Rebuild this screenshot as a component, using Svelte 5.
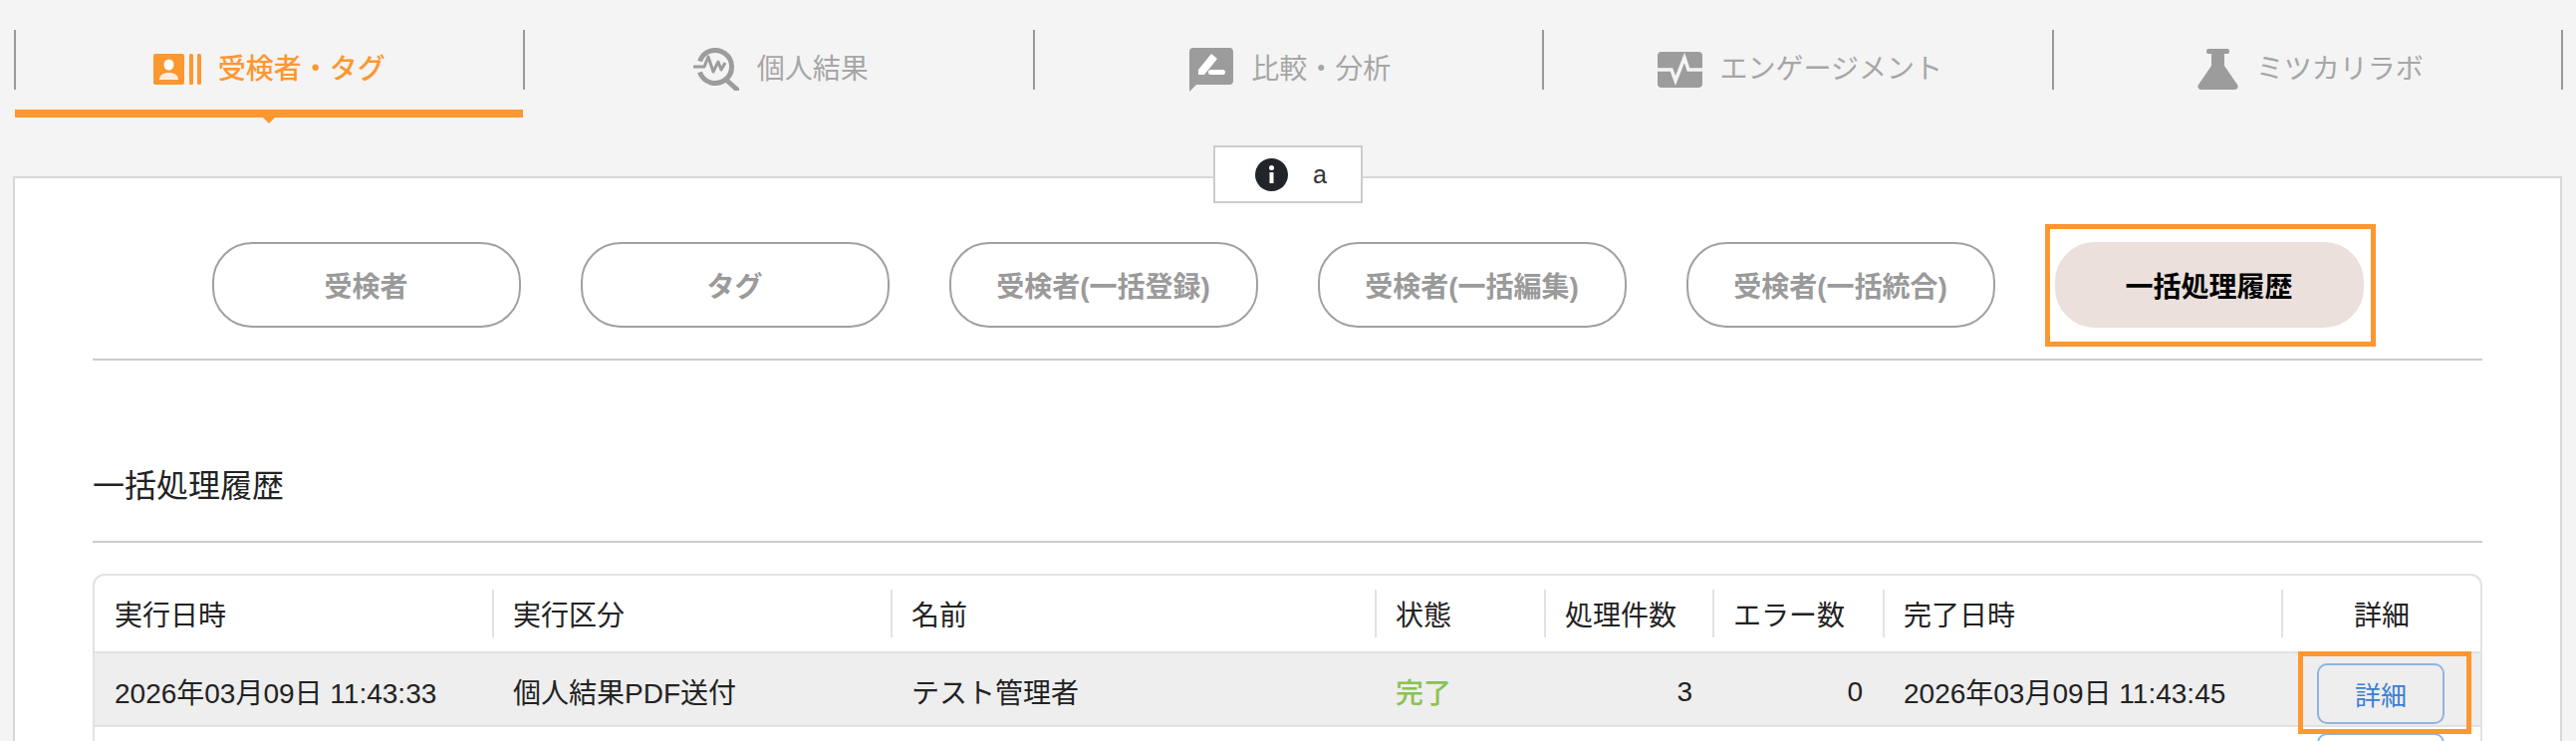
<script>
	const pills = ['受検者', 'タグ', '受検者(一括登録)', '受検者(一括編集)', '受検者(一括統合)', '一括処理履歴'];
	const columns = [
		{ label: '実行日時' },
		{ label: '実行区分' },
		{ label: '名前' },
		{ label: '状態' },
		{ label: '処理件数' },
		{ label: 'エラー数' },
		{ label: '完了日時' },
		{ label: '詳細', center: true }
	];
</script>

<div class="page">
	<nav class="tabs">
		<div class="tab tab--active">
			<a class="tab-link" href="#top">
				<svg width="49" height="31" viewBox="0 0 49 31">
					<rect width="31" height="31" rx="2" fill="currentColor" />
					<ellipse cx="15.500" cy="11" rx="5" ry="5.500" fill="#fff" />
					<path d="M6 26c0-4.500 4-7 9.500-7s9.500 2.500 9.500 7z" fill="#fbeee0" />
					<rect x="36" width="4" height="31" rx="1.500" fill="currentColor" />
					<rect x="44" width="4" height="31" rx="1.500" fill="currentColor" />
				</svg>
				<span>受検者・タグ</span>
			</a>
			<div class="tab-bar"></div>
		</div>
		<div class="tab">
			<a class="tab-link" href="#top">
				<svg width="46" height="43" viewBox="0 0 46 43" fill="none" stroke="currentColor">
					<path d="M6.500 13.500a16.500 16.500 0 1 1 0 11" stroke-width="5" />
					<path d="M0 19h11l4-10 5 15 5-10 3 8 4-7" stroke-width="3" stroke-linejoin="round" />
					<path d="M34 33l10 9" stroke-width="5" stroke-linecap="round" />
				</svg>
				<span>個人結果</span>
			</a>
		</div>
		<div class="tab">
			<a class="tab-link" href="#top">
				<svg width="44" height="44" viewBox="0 0 44 44">
					<path d="M4 0h36a4 4 0 0 1 4 4v29a4 4 0 0 1-4 4H7l-7 7V4a4 4 0 0 1 4-4z" fill="currentColor" />
					<path d="M9 27v-5L22 6l6 5-13 16z" fill="#fff" />
					<rect x="19" y="22" width="17" height="5" rx="2.500" fill="#fff" />
				</svg>
				<span>比較・分析</span>
			</a>
		</div>
		<div class="tab">
			<a class="tab-link" href="#top">
				<svg width="45" height="36" viewBox="0 0 45 36">
					<rect width="45" height="36" rx="4" fill="currentColor" />
					<path d="M0 18h14l4 11 9-23 4 12h14" fill="none" stroke="#f4f4f4" stroke-width="3.500" />
				</svg>
				<span>エンゲージメント</span>
			</a>
		</div>
		<div class="tab">
			<a class="tab-link" href="#top">
				<svg width="41" height="41" viewBox="0 0 41 41">
					<rect x="9" width="23" height="5" rx="2" fill="currentColor" />
					<path d="M14 4h13v13l13 19c1.500 2.500 0 5-3 5H4c-3 0-4.500-2.500-3-5l13-19z" fill="currentColor" />
				</svg>
				<span>ミツカリラボ</span>
			</a>
		</div>
	</nav>

	<main class="panel">
		<div class="notice">
			<svg width="33" height="33" viewBox="0 0 33 33">
				<circle cx="16.500" cy="16.500" r="16.500" fill="#212529" />
				<rect x="14.500" y="14" width="4" height="11" fill="#fff" />
				<circle cx="16.500" cy="9.500" r="2.500" fill="#fff" />
			</svg>
			<span>a</span>
		</div>

		<div class="pills">
			{#each pills as pill, i}
				<button class="pill" class:pill--active={i === pills.length - 1}>{pill}</button>
			{/each}
		</div>

		<h2 class="title">一括処理履歴</h2>

		<div class="table-box">
			<table>
				<colgroup>
					<col style="width: 399px" />
					<col style="width: 400px" />
					<col style="width: 486px" />
					<col style="width: 170px" />
					<col style="width: 169px" />
					<col style="width: 171px" />
					<col style="width: 400px" />
					<col style="width: 200px" />
				</colgroup>
				<thead>
					<tr>
						{#each columns as col, i}
							<th>
								<div class="th-inner" class:th-inner--first={i === 0} class:center={col.center}>{col.label}</div>
							</th>
						{/each}
					</tr>
				</thead>
				<tbody>
					<tr class="selected">
						<td>2026年03月09日 11:43:33</td>
						<td>個人結果PDF送付</td>
						<td>テスト管理者</td>
						<td class="done">完了</td>
						<td class="num">3</td>
						<td class="num">0</td>
						<td>2026年03月09日 11:43:45</td>
						<td class="action"><button class="detail">詳細</button></td>
					</tr>
					<tr>
						<td colspan="7"></td>
						<td class="action"><button class="detail">詳細</button></td>
					</tr>
				</tbody>
			</table>
		</div>
	</main>

	<!-- annotation frames drawn over the screen -->
	<div class="mark mark--tab"></div>
	<div class="mark mark--detail"></div>
</div>

<style>
	:global(body) {
		margin: 0;
		background: #f4f4f4;
	}

	.page {
		position: relative;
		width: 2586px;
		height: 744px;
		overflow: hidden;
		background: #f4f4f4;
		font-family: "Liberation Sans", "Noto Sans CJK JP", sans-serif;
		font-size: 28px;
		color: #222;
	}

	.tabs {
		display: flex;
		height: 118px;
		margin: 0 0 59px 13.500px;
		padding-top: 30px;
		box-sizing: border-box;
	}

	.tab {
		width: 511.500px;
		display: flex;
		flex-direction: column;
		color: #9c9c9c;
	}

	.tab:last-child {
		width: 513.500px;
	}

	.tab--active {
		color: #fd9730;
		font-weight: 500;
	}

	.tab-link {
		display: flex;
		align-items: center;
		justify-content: center;
		gap: 18px;
		height: 60px;
		box-sizing: border-box;
		padding: 19px 0 0 4px;
		border-left: 2px solid #999;
		color: inherit;
		text-decoration: none;
		white-space: nowrap;
	}

	.tab--active .tab-link {
		gap: 16px;
		padding-left: 0;
	}

	.tab:last-child .tab-link {
		padding-left: 6px;
		border-right: 2px solid #999;
	}

	.tab-link svg {
		flex-shrink: 0;
	}

	.tab-link span {
		margin-top: -6px;
	}

	.tab:not(.tab--active) .tab-link span {
		color: #a6a6a6;
	}

	.tab-bar {
		position: relative;
		height: 8px;
		margin: 20px 0 0 1px;
		background: #fd9730;
	}

	.tab-bar::after {
		content: "";
		position: absolute;
		left: 50%;
		top: 8px;
		margin-left: -6px;
		border: 6px solid transparent;
		border-top-color: #fd9730;
		border-bottom: 0;
	}

	.panel {
		position: relative;
		margin: 0 14px 0 13px;
		height: 700px;
		padding: 64px 78px 0;
		border: 2px solid #d8d8d8;
		background: #fff;
	}

	.notice {
		position: absolute;
		left: 1203px;
		top: -33px;
		width: 150px;
		height: 58px;
		box-sizing: border-box;
		display: flex;
		align-items: center;
		gap: 25px;
		padding-left: 40px;
		border: 2px solid #ccc;
		background: #fff;
		font-size: 25px;
		color: #333;
	}

	.pills {
		display: flex;
		justify-content: center;
		gap: 60px;
		padding-bottom: 31px;
		border-bottom: 2px solid #ccc;
	}

	.pill {
		width: 310px;
		height: 86px;
		box-sizing: border-box;
		border: 2px solid #a0a0a0;
		border-radius: 40px;
		background: #fff;
		font: inherit;
		font-weight: 700;
		color: #9a9a9a;
	}

	.pill--active {
		border-color: #ebe0dc;
		background: #ebe0dc;
		color: #000;
	}

	.title {
		margin: 0;
		padding: 106px 0 35px;
		border-bottom: 2px solid #ccc;
		font-size: 32px;
		font-weight: 400;
		line-height: 40px;
		color: #222;
	}

	.table-box {
		margin-top: 31px;
		border: 2px solid #e2e2e2;
		border-bottom: 0;
		border-radius: 12px 12px 0 0;
		background: #fff;
	}

	table {
		width: 100%;
		table-layout: fixed;
		border-collapse: collapse;
	}

	th {
		height: 76px;
		padding: 0;
		font-weight: 400;
		text-align: left;
	}

	.th-inner {
		height: 48px;
		padding-left: 19px;
		border-left: 2px solid #e2e2e2;
		line-height: 54px;
	}

	.th-inner--first {
		padding-left: 20px;
		border-left: 0;
	}

	.center {
		padding-left: 0;
		text-align: center;
	}

	td {
		height: 74px;
		box-sizing: border-box;
		padding: 3px 0 0 21px;
		border-top: 2px solid #e2e2e2;
		border-bottom: 2px solid #e2e2e2;
		white-space: nowrap;
	}

	td:first-child {
		padding-left: 20px;
	}

	.selected td {
		background: #eee;
	}

	.done {
		color: #8cc152;
		font-weight: 500;
	}

	td.num {
		padding: 5px 20px 0 0;
		text-align: right;
	}

	td.action {
		padding: 0;
		text-align: center;
	}

	.detail {
		display: block;
		width: 128px;
		height: 61px;
		margin: 0 auto;
		box-sizing: border-box;
		border: 2px solid #8fb4e0;
		border-radius: 10px;
		background: transparent;
		font: inherit;
		font-size: 26px;
		color: #3a7fd5;
	}

	.selected .detail {
		margin-top: 9px;
	}

	.mark {
		position: absolute;
		box-sizing: border-box;
		border: 5px solid #fd9730;
		pointer-events: none;
	}

	.mark--tab {
		left: 2053px;
		top: 225px;
		width: 332px;
		height: 123px;
	}

	.mark--detail {
		left: 2307px;
		top: 654px;
		width: 174px;
		height: 83px;
	}
</style>
